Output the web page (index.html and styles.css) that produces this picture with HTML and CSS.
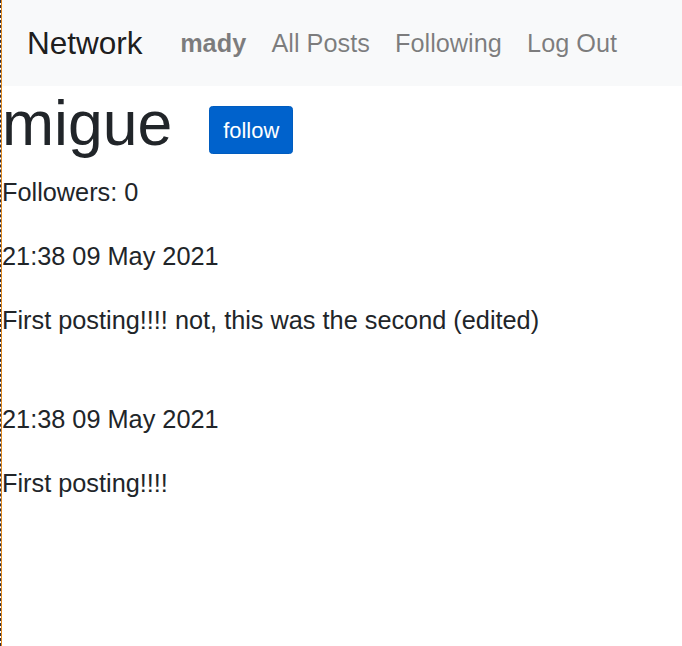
FILE: index.html
```html
<!DOCTYPE html>
<html lang="en">
<head>
<meta charset="utf-8">
<title>Network</title>
<link rel="stylesheet" href="styles.css">
</head>
<body>
<nav class="navbar">
  <a class="brand" href="#">Network</a>
  <ul class="nav">
    <li><a class="nav-link" href="#"><strong>mady</strong></a></li>
    <li><a class="nav-link" href="#">All Posts</a></li>
    <li><a class="nav-link" href="#">Following</a></li>
    <li><a class="nav-link" href="#">Log Out</a></li>
  </ul>
</nav>
<main class="body">
  <div class="profile-head">
    <h1 class="username">migue</h1>
    <button class="btn-follow" type="button">follow</button>
  </div>
  <p>Followers: 0</p>
  <div class="post">
    <p>21:38 09 May 2021</p>
    <p>First posting!!!! not, this was the second (edited)</p>
  </div>
  <div class="spacer"></div>
  <div class="post">
    <p>21:38 09 May 2021</p>
    <p>First posting!!!!</p>
  </div>
</main>
</body>
</html>
```
FILE: styles.css
```css
html {
  margin: 0;
  padding: 0;
  border-left: 1px dashed #2b2b3a;
  min-height: 100%;
  background: #fff;
}
body {
  margin: 0;
  min-height: 646px;
  border-left: 1px solid #e0891f;
  font-family: "Liberation Sans", Arial, sans-serif;
  font-size: 25.3px;
  line-height: 38.5px;
  color: #212529;
  background: #fff;
}
.navbar {
  display: flex;
  align-items: center;
  height: 86px;
  padding: 0 25px;
  background: #f8f9fa;
}
.brand {
  font-size: 31.5px;
  color: rgba(0, 0, 0, 0.9);
  text-decoration: none;
  margin-right: 25px;
  line-height: 46px;
}
.nav {
  display: flex;
  list-style: none;
  margin: 0;
  padding: 0;
}
.nav-link {
  display: block;
  padding: 0 12.6px;
  color: rgba(0, 0, 0, 0.5);
  text-decoration: none;
  line-height: 38px;
}
.nav-link strong {
  font-weight: 700;
}
.profile-head {
  display: flex;
  align-items: center;
  margin-bottom: 12px;
}
.username {
  margin: 0;
  font-size: 62.5px;
  font-weight: 500;
  line-height: 75px;
}
.btn-follow {
  margin-left: 37px;
  margin-top: 13px;
  padding: 6.5px 13px;
  font-family: "Liberation Sans", Arial, sans-serif;
  font-size: 21.9px;
  line-height: 33px;
  color: #fff;
  background: #0062cc;
  border: 1px solid #005cbf;
  border-radius: 3.5px;
}
p {
  margin: 0 0 25.3px 0;
}
.spacer {
  height: 36px;
}
```
